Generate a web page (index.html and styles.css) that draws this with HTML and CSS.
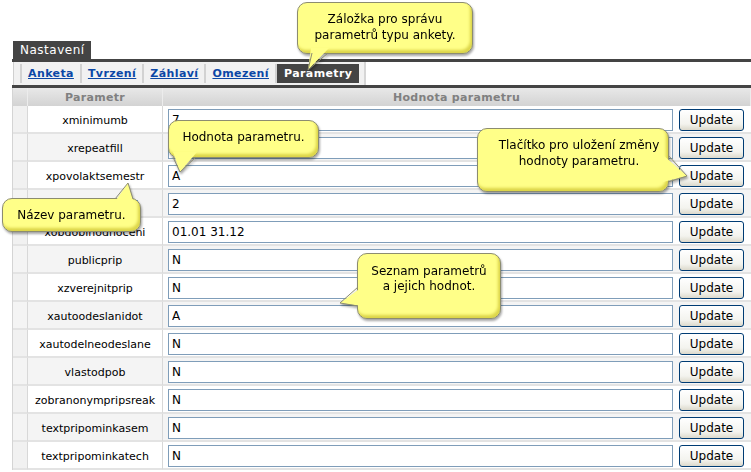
FILE: index.html
```html
<!DOCTYPE html>
<html lang="cs">
<head>
    <meta charset="UTF-8">
    <title>Nastavení - Parametry</title>
    <link rel="stylesheet" href="styles.css">
</head>
<body>
    <div class="page">
        <div class="panel-title"><span>Nastavení</span></div>
        <div class="tabs">
            <ul>
                <li><a href="#">Anketa</a></li>
                <li><a href="#">Tvrzení</a></li>
                <li><a href="#">Záhlaví</a></li>
                <li><a href="#">Omezení</a></li>
                <li class="active">Parametry</li>
            </ul>
        </div>
        <table class="params">
            <colgroup>
                <col class="col-edge">
                <col class="col-name">
                <col class="col-value">
                <col class="col-btn">
            </colgroup>
            <thead>
                <tr><th></th><th>Parametr</th><th colspan="2">Hodnota parametru</th></tr>
            </thead>
            <tbody>
                <tr><td class="edge"></td><td class="name">xminimumb</td><td class="value"><input type="text" value="7"></td><td class="btn"><button>Update</button></td></tr>
                <tr><td class="edge"></td><td class="name">xrepeatfill</td><td class="value"><input type="text" value="N"></td><td class="btn"><button>Update</button></td></tr>
                <tr><td class="edge"></td><td class="name">xpovolaktsemestr</td><td class="value"><input type="text" value="A"></td><td class="btn"><button>Update</button></td></tr>
                <tr><td class="edge"></td><td class="name">xmaxopakovani</td><td class="value"><input type="text" value="2"></td><td class="btn"><button>Update</button></td></tr>
                <tr><td class="edge"></td><td class="name">xobdobihodnoceni</td><td class="value"><input type="text" value="01.01 31.12"></td><td class="btn"><button>Update</button></td></tr>
                <tr><td class="edge"></td><td class="name">publicprip</td><td class="value"><input type="text" value="N"></td><td class="btn"><button>Update</button></td></tr>
                <tr><td class="edge"></td><td class="name">xzverejnitprip</td><td class="value"><input type="text" value="N"></td><td class="btn"><button>Update</button></td></tr>
                <tr><td class="edge"></td><td class="name">xautoodeslanidot</td><td class="value"><input type="text" value="A"></td><td class="btn"><button>Update</button></td></tr>
                <tr><td class="edge"></td><td class="name">xautodelneodeslane</td><td class="value"><input type="text" value="N"></td><td class="btn"><button>Update</button></td></tr>
                <tr><td class="edge"></td><td class="name">vlastodpob</td><td class="value"><input type="text" value="N"></td><td class="btn"><button>Update</button></td></tr>
                <tr><td class="edge"></td><td class="name">zobranonympripsreak</td><td class="value"><input type="text" value="N"></td><td class="btn"><button>Update</button></td></tr>
                <tr><td class="edge"></td><td class="name">textpripominkasem</td><td class="value"><input type="text" value="N"></td><td class="btn"><button>Update</button></td></tr>
                <tr><td class="edge"></td><td class="name">textpripominkatech</td><td class="value"><input type="text" value="N"></td><td class="btn"><button>Update</button></td></tr>
            </tbody>
        </table>
    </div>

    <!-- popisky -->
    <div class="callout tip-tab">Záložka pro správu<br>parametrů typu ankety.
        <svg class="tail"><polygon points="14,46 32,46 11,68"/><polyline points="15,51 11,68 31,51"/></svg>
    </div>
    <div class="callout tip-value">Hodnota parametru.
        <svg class="tail"><polygon points="5,32 29,32 12,52"/><polyline points="5,37 12,52 28,37"/></svg>
    </div>
    <div class="callout tip-button">Tlačítko pro uložení změny<br>hodnoty parametru.
        <svg class="tail"><polygon points="186,27 186,54 210,48"/><polyline points="191,27 210,48 191,54"/></svg>
    </div>
    <div class="callout tip-name">Název parametru.
        <svg class="tail"><polygon points="112,5 132,5 126,-15"/><polyline points="113,1 126,-15 131,1"/></svg>
    </div>
    <div class="callout tip-list">Seznam parametrů<br>a jejich hodnot.
        <svg class="tail"><polygon points="5,34 5,53 -17,50"/><polyline points="1,34 -17,50 1,53"/></svg>
    </div>
</body>
</html>
```

FILE: styles.css
```css
body {
    margin: 0;
    padding: 0;
    background-color: #fff;
    font-family: "DejaVu Sans", Verdana, sans-serif;
    color: #000;
}
.page {
    padding: 41px 0 0 12px;
}
.panel-title {
    display: flex;
    border-bottom: 3px solid #444;
    padding-left: 1px;
}
.panel-title span {
    display: block;
    width: 78px;
    height: 18px;
    line-height: 19px;
    padding-left: 7px;
    box-sizing: border-box;
    background-color: #444;
    color: #fff;
    font-size: 12px;
    letter-spacing: 0.5px;
}
.tabs {
    display: flex;
    border-bottom: 3px solid #444;
    padding-left: 1px;
}
.tabs ul {
    list-style: none;
    display: flex;
    margin: 0;
    padding: 2px 5px 2px 6px;
    background-color: #f1f1f1;
    border-left: 1px solid #cfcfcf;
    border-right: 2px solid #d6d6d6;
}
.tabs li {
    height: 19px;
    line-height: 19px;
    padding: 0 6px;
    border-left: 2px solid #d2d2d2;
    font-size: 11px;
    font-weight: bold;
    letter-spacing: 0.4px;
}
.tabs a {
    color: #0b47a6;
    text-decoration: underline;
}
.tabs li.active {
    background-color: #444;
    color: #fff;
    border-left-color: #d2d2d2;
    padding: 0 7px;
}
.params {
    width: 739px;
    table-layout: fixed;
    border-collapse: separate;
    border-spacing: 0;
    border-left: 1px solid #d4d4d4;
    font-size: 11px;
}
.col-edge { width: 15px; }
.col-name { width: 135px; }
.col-value { width: 513px; }
.col-btn { width: 75px; }
.params th {
    height: 18px;
    padding: 0;
    background: linear-gradient(#e8e8e8, #d3d3d3);
    color: #808080;
    font-weight: bold;
    letter-spacing: 0.3px;
    border-right: 1px solid #ececec;
    text-align: center;
}
.params td {
    height: 22px;
    padding: 3px 0 1px 0;
    border-bottom: 2px solid #e3e3e3;
    vertical-align: middle;
}
.params tbody tr:nth-child(even) td {
    background-color: #f4f4f4;
}
.params td.edge {
    background-color: #f1f1f1;
    border-right: 1px solid #d8d8d8;
}
.params td.name {
    text-align: center;
    border-right: 1px solid #d8d8d8;
}
.params td.value {
    padding-left: 5px;
    padding-right: 3px;
}
.params td.btn {
    padding-left: 3px;
}
.params input {
    display: block;
    width: 100%;
    height: 22px;
    box-sizing: border-box;
    margin: 0;
    padding: 0 3px;
    border: 1px solid #7f9db9;
    background: #fff;
    font-family: "DejaVu Sans", Verdana, sans-serif;
    font-size: 12px;
    color: #000;
}
.params button {
    display: block;
    width: 65px;
    height: 22px;
    margin: 0;
    padding: 0;
    border: 1px solid #003c74;
    border-radius: 3px;
    background: linear-gradient(#ffffff, #f3f3ee 70%, #dcd9cc);
    font-family: "DejaVu Sans", Verdana, sans-serif;
    font-size: 12px;
    color: #000;
}
/* Popisky */
.callout {
    position: absolute;
    box-sizing: border-box;
    background-color: #ffff88;
    border: 1px solid #8c8c70;
    border-radius: 10px;
    box-shadow: inset -2px -3px 3px #dcd548;
    filter: drop-shadow(1px 2px 1px rgba(0, 0, 0, 0.35));
    font-size: 12px;
    line-height: 16px;
    text-align: center;
    padding-top: 8px;
}
.callout .tail {
    position: absolute;
    left: -1px;
    top: -1px;
    width: 1px;
    height: 1px;
    overflow: visible;
}
.tail polygon {
    fill: #ffff88;
}
.tail polyline {
    fill: none;
    stroke: #8c8c70;
    stroke-width: 1;
}
.tip-tab {
    left: 297px;
    top: 2px;
    width: 176px;
    height: 52px;
}
.tip-value {
    left: 168px;
    top: 120px;
    width: 151px;
    height: 38px;
}
.tip-button {
    left: 477px;
    top: 128px;
    width: 192px;
    height: 64px;
    padding-left: 14px;
    padding-right: 2px;
}
.tip-name {
    left: 2px;
    top: 198px;
    width: 139px;
    height: 34px;
}
.tip-list {
    left: 357px;
    top: 253px;
    width: 144px;
    height: 66px;
    padding-top: 10px;
    line-height: 15px;
}
```
